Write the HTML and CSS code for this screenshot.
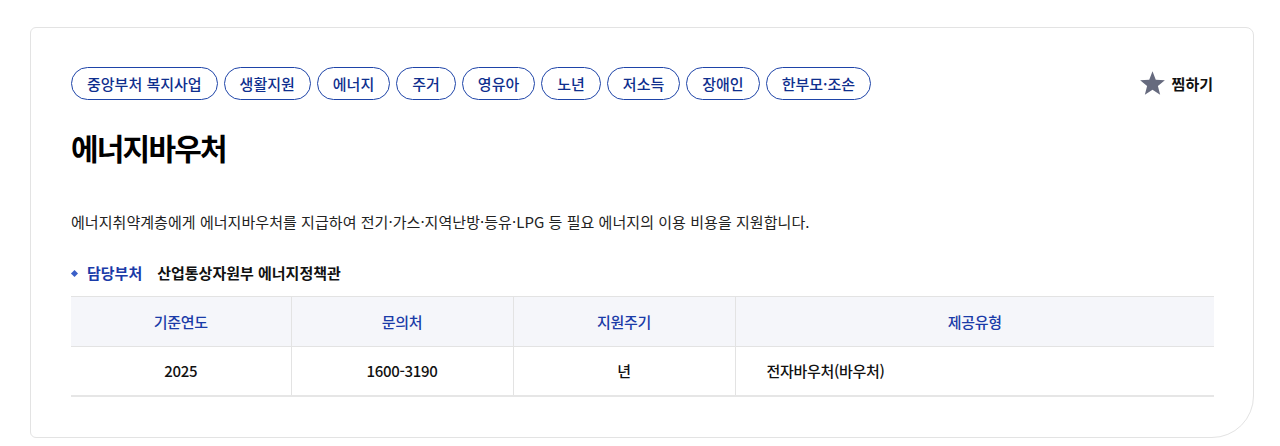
FILE: index.html
```html
<!DOCTYPE html>
<html lang="ko">
<head>
<meta charset="utf-8">
<title>에너지바우처</title>
<link rel="stylesheet" href="styles.css">
</head>
<body>
<div class="page">
  <section class="card">
    <div class="top">
      <ul class="tags">
        <li class="tag">중앙부처 복지사업</li>
        <li class="tag">생활지원</li>
        <li class="tag">에너지</li>
        <li class="tag">주거</li>
        <li class="tag">영유아</li>
        <li class="tag">노년</li>
        <li class="tag">저소득</li>
        <li class="tag">장애인</li>
        <li class="tag">한부모·조손</li>
      </ul>
      <button class="fav" type="button">
        <svg class="star" viewBox="0 0 24 24" width="27" height="27" aria-hidden="true"><path d="M12 1 L14.9 8.6 L23 9.1 L16.8 14.2 L18.8 22 L12 17.6 L5.2 22 L7.2 14.2 L1 9.1 L9.1 8.6 Z" fill="#666a7e"/></svg>
        <span>찜하기</span>
      </button>
    </div>
    <h1 class="title">에너지바우처</h1>
    <p class="desc">에너지취약계층에게 에너지바우처를 지급하여 전기·가스·지역난방·등유·LPG 등 필요 에너지의 이용 비용을 지원합니다.</p>
    <div class="dept">
      <span class="dept-label">담당부처</span>
      <span class="dept-value">산업통상자원부 에너지정책관</span>
    </div>
    <table class="info">
      <colgroup>
        <col class="c1"><col class="c2"><col class="c3"><col class="c4">
      </colgroup>
      <thead>
        <tr><th>기준연도</th><th>문의처</th><th>지원주기</th><th>제공유형</th></tr>
      </thead>
      <tbody>
        <tr><td>2025</td><td>1600-3190</td><td>년</td><td class="left">전자바우처(바우처)</td></tr>
      </tbody>
    </table>
  </section>
</div>
</body>
</html>
```

FILE: styles.css
```css
* { box-sizing: border-box; }
html, body { margin: 0; padding: 0; background: #fff; }
body {
  font-family: "Noto Sans CJK KR", "Noto Sans", sans-serif;
  color: #111;
}
.page { padding: 27px 26px 9px 30px; }
.card {
  border: 1px solid #e3e3e3;
  border-radius: 6px 8px 42px 6px;
  padding: 39px 39px 40px 40px;
  height: 411px;
}
.top {
  display: flex;
  justify-content: space-between;
  align-items: center;
}
.tags {
  list-style: none;
  margin: 0;
  padding: 0;
  display: flex;
  gap: 6px;
}
.tag {
  height: 33px;
  padding: 0 15px;
  border: 1px solid #1e44a8;
  border-radius: 17px;
  color: #0f2f8e;
  font-size: 15px;
  font-weight: 500;
  line-height: 31px;
  letter-spacing: 0;
}
.fav {
  display: flex;
  align-items: center;
  gap: 6px;
  background: none;
  border: 0;
  padding: 0;
  margin-right: 1px;
  font-family: inherit;
  font-size: 15px;
  font-weight: 700;
  color: #111;
  letter-spacing: 0;
}
.title {
  margin: 27px 0 0;
  font-size: 30px;
  line-height: 40px;
  font-weight: 700;
  letter-spacing: -1.8px;
  color: #000;
}
.desc {
  margin: 43px 0 0;
  font-size: 15px;
  line-height: 24px;
  color: #222;
  letter-spacing: 0.05px;
}
.dept {
  margin-top: 27px;
  display: flex;
  align-items: center;
  font-size: 15px;
  line-height: 24px;
  letter-spacing: 0;
}
.dept-label {
  display: flex;
  align-items: center;
  color: #1a3ba8;
  font-weight: 700;
  margin-right: 15px;
}
.dept-label::before {
  content: "";
  width: 5px;
  height: 5px;
  background: #3a5fc8;
  transform: rotate(45deg);
  margin: 0 10px 0 1px;
}
.dept-value { font-weight: 700; color: #111; }
.info {
  margin-top: 11px;
  width: 100%;
  border-collapse: collapse;
  font-size: 15px;
  letter-spacing: -0.3px;
}
.c1 { width: 220px; }
.c2, .c3 { width: 222px; }
.info th, .info td {
  height: 50px;
  text-align: center;
  border-left: 1px solid #e3e3e3;
  border-top: 1px solid #e3e3e3;
  padding: 0;
}
.info th:first-child, .info td:first-child { border-left: 0; }
.info th {
  background: #f5f6fa;
  color: #1a3ba8;
  font-weight: 500;
}
.info td {
  color: #111;
  font-weight: 500;
  height: 49px;
  border-bottom: 2px solid #e6e6e6;
}
.info td.left { text-align: left; padding-left: 31px; }
```
